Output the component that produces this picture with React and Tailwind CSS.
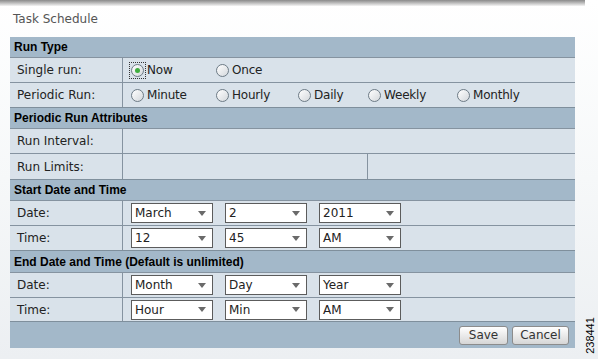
import React from 'react';

const body = { fontFamily: '"DejaVu Sans", Tahoma, sans-serif' };
const bold = { fontFamily: '"Liberation Sans", Arial, sans-serif' };

function Header({ children, h }) {
  return (
    <div
      className={`flex items-center border-t border-[#7f8f9c] bg-[#a3b8c9] pl-[4px] text-[12px] font-bold text-black ${h}`}
      style={bold}
    >
      {children}
    </div>
  );
}

function Row({ label, h, children }) {
  return (
    <div className={`flex border-t border-[#8593a0] bg-[#d9e2ea] ${h}`}>
      <div className="flex w-[113px] shrink-0 items-center border-r border-[#8593a0] pl-[7px] text-[12px] text-[#222]">
        {label}
      </div>
      <div className="flex flex-1 items-center">{children}</div>
    </div>
  );
}

function Radio({ label, checked, w }) {
  return (
    <div className={`flex items-center ${w}`}>
      <span
        className={`flex h-[17px] w-[17px] items-center justify-center ${
          checked ? 'outline outline-1 outline-dotted outline-[#333] -outline-offset-1' : ''
        }`}
      >
        <span className="flex h-[13px] w-[13px] items-center justify-center rounded-full border border-[#6d7b86] bg-gradient-to-br from-white to-[#d4d8dc]">
          {checked && <span className="h-[5px] w-[5px] rounded-full bg-[#3fae3f]" />}
        </span>
      </span>
      <span className="ml-[1px] text-[12px] tracking-[-0.2px] text-[#222]">{label}</span>
    </div>
  );
}

function Select({ value }) {
  return (
    <div className="flex h-[20px] w-[82px] items-center justify-between border border-[#5c5c5c] bg-white pl-[3px] pr-[6px] text-[12px] text-[#222]">
      <span>{value}</span>
      <svg width="8" height="5" viewBox="0 0 8 5">
        <path d="M0 0h8L4 5z" fill="#6a6a6a" />
      </svg>
    </div>
  );
}

function Selects({ values }) {
  return (
    <div className="flex gap-[12px] pl-[8px]">
      {values.map((v) => (
        <Select key={v} value={v} />
      ))}
    </div>
  );
}

function Btn({ children, w }) {
  return (
    <button
      className={`h-[19px] ${w} rounded-[3px] border border-[#8c8c8c] bg-gradient-to-b from-white to-[#d6d6d6] text-[12px] leading-none text-[#333]`}
    >
      {children}
    </button>
  );
}

export default function App() {
  return (
    <div
      className="relative h-[359px] w-[598px] overflow-hidden bg-gradient-to-b from-white via-[#f6f8f9] to-[#eceff2]"
      style={body}
    >
      <div className="h-[6px] w-[585px] bg-gradient-to-b from-[#8a8a8a] to-[#f4f4f4]" />
      <div className="pl-[13px] pt-[6px] text-[12px] leading-[14px] text-[#555]">Task Schedule</div>

      <div className="ml-[10px] mt-[11px] w-[565px]">
        <Header h="h-[20px] border-t-0">Run Type</Header>
        <Row label="Single run:" h="h-[25px]">
          <div className="flex pl-[6px]">
            <Radio label="Now" checked w="w-[85px]" />
            <Radio label="Once" w="w-[82px]" />
          </div>
        </Row>
        <Row label="Periodic Run:" h="h-[25px]">
          <div className="flex pl-[6px]">
            <Radio label="Minute" w="w-[85px]" />
            <Radio label="Hourly" w="w-[82px]" />
            <Radio label="Daily" w="w-[70px]" />
            <Radio label="Weekly" w="w-[89px]" />
            <Radio label="Monthly" w="w-[80px]" />
          </div>
        </Row>
        <Header h="h-[21px]">Periodic Run Attributes</Header>
        <Row label="Run Interval:" h="h-[25px]" />
        <Row label="Run Limits:" h="h-[26px]">
          <div className="h-full w-[245px] border-r border-[#8593a0]" />
        </Row>
        <Header h="h-[21px]">Start Date and Time</Header>
        <Row label="Date:" h="h-[25px]">
          <Selects values={['March', '2', '2011']} />
        </Row>
        <Row label="Time:" h="h-[25px]">
          <Selects values={['12', '45', 'AM']} />
        </Row>
        <Header h="h-[22px]">End Date and Time (Default is unlimited)</Header>
        <Row label="Date:" h="h-[25px]">
          <Selects values={['Month', 'Day', 'Year']} />
        </Row>
        <Row label="Time:" h="h-[24px]">
          <Selects values={['Hour', 'Min', 'AM']} />
        </Row>
        <div className="flex h-[27px] items-center justify-end gap-[4px] border-t border-[#7f8f9c] bg-[#a3b8c9] pr-[6px]">
          <Btn w="w-[49px]">Save</Btn>
          <Btn w="w-[57px]">Cancel</Btn>
        </div>
      </div>

      <div
        className="absolute left-[572px] top-[330px] origin-center -rotate-90 text-[11px] leading-none text-black"
        style={bold}
      >
        238441
      </div>
    </div>
  );
}
